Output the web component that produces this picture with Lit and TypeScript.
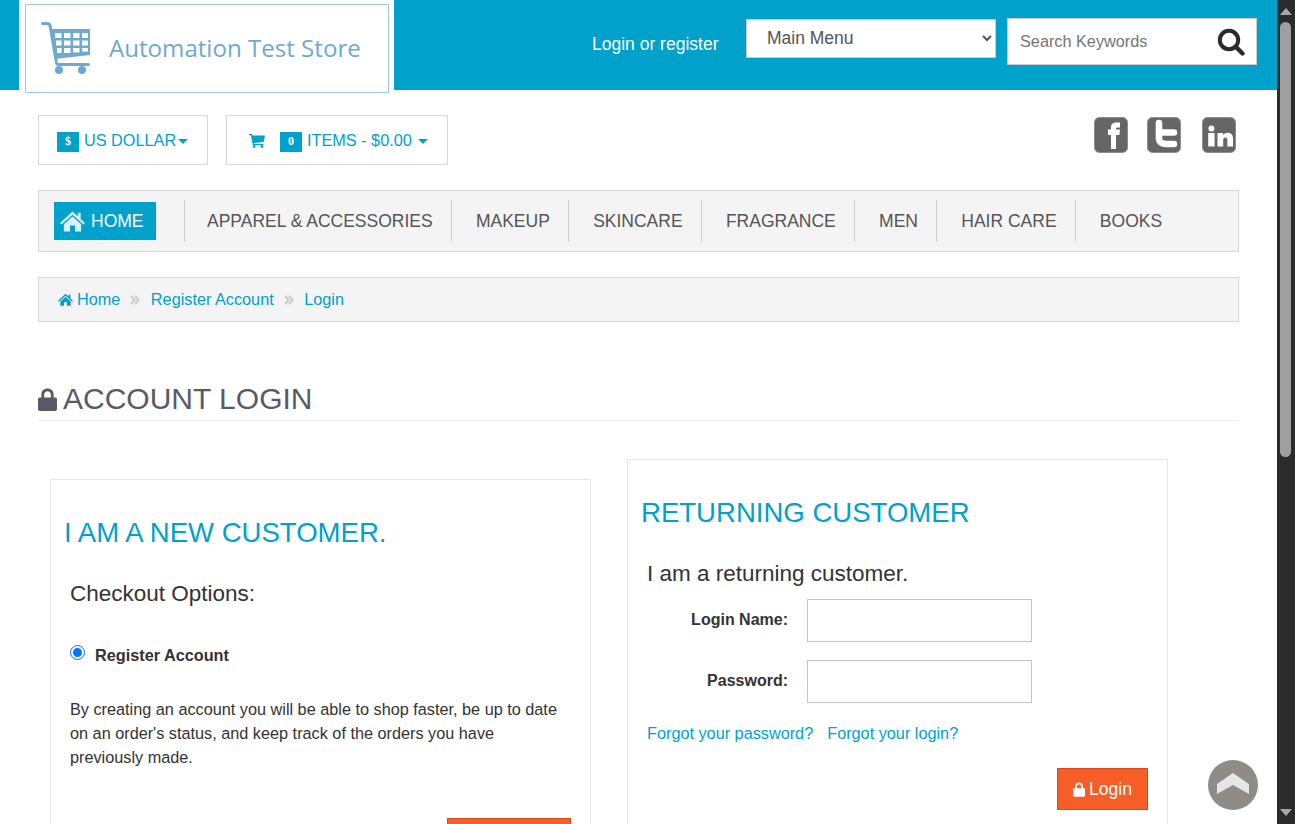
import { LitElement, css, html, svg } from 'lit'
import { customElement } from 'lit/decorators.js'

const homeIcon = (cls: string) => html`
  <svg class=${cls} viewBox="0 0 26 22">
    <path fill="currentColor" d="M13 1 L18.5 6 V2.5 H21.5 V8.8 L26 13 L24.4 14.7 L13 4.4 L1.6 14.7 L0 13 Z" />
    <path fill="currentColor" d="M13 6.4 L22 14.4 V22 H15.6 V15.6 H10.4 V22 H4 V14.4 Z" />
  </svg>
`

const lockIcon = (cls: string) => html`
  <svg class=${cls} viewBox="0 0 20 24">
    <path
      fill="currentColor"
      d="M2 10 H3.5 V7 C3.5 3 6.2 0.5 10 0.5 C13.8 0.5 16.5 3 16.5 7 V10 H18 C19.2 10 20 10.8 20 12 V22 C20 23.2 19.2 24 18 24 H2 C0.8 24 0 23.2 0 22 V12 C0 10.8 0.8 10 2 10 Z M6.5 10 H13.5 V7 C13.5 4.8 12 3.4 10 3.4 C8 3.4 6.5 4.8 6.5 7 Z"
      fill-rule="evenodd"
    />
  </svg>
`

const angleDouble = html`
  <svg class="sep-icon" viewBox="0 0 10 10">
    <path d="M1 1 L4.6 5 L1 9 M5 1 L8.6 5 L5 9" fill="none" stroke="currentColor" stroke-width="2" />
  </svg>
`

const cartBars = svg`
  <path d="M1.5 1.5 H6 C7.6 1.5 8.8 2.4 9.1 3.8 L15.5 41 C15.7 42 16.3 42.5 17.5 42.5 H47.5" fill="none" stroke="currentColor" stroke-width="3" stroke-linecap="round"/>
  <path fill="currentColor" d="M9.5 7 H49 V33 L13.5 37 Z"/>
  <g fill="#fff">
    <rect x="14" y="11" width="6.5" height="5"/><rect x="23" y="11" width="6.5" height="5"/><rect x="32" y="11" width="6.5" height="5"/><rect x="41" y="11" width="6" height="5"/>
    <rect x="15" y="18.5" width="5.5" height="5"/><rect x="23" y="18.5" width="6.5" height="5"/><rect x="32" y="18.5" width="6.5" height="5"/><rect x="41" y="18.5" width="6" height="5"/>
    <rect x="16" y="26" width="4.5" height="5"/><rect x="23" y="26" width="6.5" height="5"/><rect x="32" y="26" width="6.5" height="4.4"/><rect x="41" y="26" width="6" height="3.6"/>
  </g>
  <circle cx="18" cy="48" r="4" fill="currentColor"/>
  <circle cx="41" cy="48" r="4" fill="currentColor"/>
`

const socialBox = svg`<rect x="0.5" y="0.5" width="33" height="35" rx="5" fill="#666" stroke="#8e8e8e"/>`

const socialIcons = [
  svg`${socialBox}<path fill="#fff" d="M17 32 V18 H14 V12.5 H17 V10.5 C17 7 19 5.5 22.5 5.5 H26 V10.5 H24 C22.5 10.5 22 11 22 12 V12.5 H26 L25.4 18 H22 V32 Z"/>`,
  svg`${socialBox}<path d="M12 6 V21 C12 25 15 27 19 27 H27 M12 15.5 H27" fill="none" stroke="#fff" stroke-width="6.6" stroke-linejoin="round" stroke-linecap="round"/>`,
  svg`${socialBox}<g fill="#fff"><circle cx="9.4" cy="11.5" r="3"/><rect x="6.2" y="16" width="6.4" height="13.5"/><path d="M15.5 16 H21 V18 C22 16.6 24 15.8 26 15.8 C29 15.8 31 18 31 21.5 V29.5 H25.4 V23 C25.4 21.4 24.6 20.5 23.4 20.5 C22 20.5 21.2 21.5 21.2 23 V29.5 H15.5 Z"/></g>`,
]

const navItems = [
  'APPAREL & ACCESSORIES',
  'MAKEUP',
  'SKINCARE',
  'FRAGRANCE',
  'MEN',
  'HAIR CARE',
  'BOOKS',
]

@customElement('app-root')
export class AppRoot extends LitElement {
  render() {
    return html`
      <div class="window">
        <div class="page">
          <header class="topbar">
            <a class="logo">
              <div class="logo-frame">
                <svg class="logo-cart" viewBox="0 0 50 53">${cartBars}</svg>
                <span class="logo-text">Automation Test Store</span>
              </div>
            </a>
            <a class="login-link">Login or register</a>
            <select class="main-menu">
              <option>Main Menu</option>
            </select>
            <div class="search">
              <span class="placeholder">Search Keywords</span>
              <svg class="search-icon" viewBox="0 0 28 28">
                <circle cx="12" cy="12" r="9.2" fill="none" stroke="currentColor" stroke-width="4" />
                <path d="M18.8 18.8 L25.5 25.5" stroke="currentColor" stroke-width="4.4" stroke-linecap="round" />
              </svg>
            </div>
          </header>

          <div class="toolbar">
            <div class="drop currency">
              <span class="badge">$</span>
              <span>US DOLLAR</span><i class="caret"></i>
            </div>
            <div class="drop cart">
              <svg class="cart-icon" viewBox="0 0 16 14">
                <path
                  fill="currentColor"
                  d="M0 0 H3 L3.5 1.6 H16 L14.6 8 L4.8 8.9 L5.1 10 H14.4 V11.2 H3.9 L1.9 1.3 H0 Z"
                />
                <circle cx="5.2" cy="12.6" r="1.4" fill="currentColor" />
                <circle cx="13" cy="12.6" r="1.4" fill="currentColor" />
              </svg>
              <span class="badge">0</span>
              <span>ITEMS - $0.00</span><i class="caret"></i>
            </div>
            <div class="social">
              ${socialIcons.map((s) => html`<svg class="soc" viewBox="0 0 34 36">${s}</svg>`)}
            </div>
          </div>

          <nav class="nav">
            <a class="home-btn">${homeIcon('home-big')}HOME</a>
            <div class="nav-items">
              ${navItems.map((n) => html`<a class="nav-item">${n}</a>`)}
            </div>
          </nav>

          <div class="crumbs">
            <a class="crumb">${homeIcon('home-small')}Home</a>
            ${angleDouble}
            <a class="crumb">Register Account</a>
            ${angleDouble}
            <a class="crumb">Login</a>
          </div>

          <h1 class="title">${lockIcon('title-lock')}ACCOUNT LOGIN</h1>

          <div class="cards">
            <section class="card card-new">
              <h2>I AM A NEW CUSTOMER.</h2>
              <h4 class="checkout">Checkout Options:</h4>
              <label class="radio">
                <input type="radio" checked />
                <b>Register Account</b>
              </label>
              <p class="blurb">
                By creating an account you will be able to shop faster, be up to date on an order's
                status, and keep track of the orders you have previously made.
              </p>
              <div class="actions actions-new">
                <button class="btn btn-wide"></button>
              </div>
            </section>

            <section class="card card-return">
              <h2>RETURNING CUSTOMER</h2>
              <h4 class="returning">I am a returning customer.</h4>
              <div class="field">
                <label>Login Name:</label>
                <input type="text" />
              </div>
              <div class="field">
                <label>Password:</label>
                <input type="password" />
              </div>
              <div class="forgot">
                <a>Forgot your password?</a>
                <a>Forgot your login?</a>
              </div>
              <div class="actions">
                <button class="btn">${lockIcon('btn-lock')}Login</button>
              </div>
            </section>
          </div>

          <a class="to-top">
            <svg viewBox="0 0 50 50">
              <circle cx="25" cy="25" r="25" fill="#8f8b87" />
              <path d="M25 13 L41 24 V34 L25 25 L9 34 V24 Z" fill="#e6e6e6" />
            </svg>
          </a>
        </div>

        <div class="scrollbar">
          <i class="arrow up"></i>
          <div class="track"><div class="thumb"></div></div>
          <i class="arrow down"></i>
        </div>
      </div>
    `
  }

  static styles = css`
    :host {
      display: block;
      height: 824px;
      font-family: 'Liberation Sans', Arial, sans-serif;
      color: #333;
    }
    * {
      box-sizing: border-box;
    }
    .window {
      display: flex;
      height: 824px;
      overflow: hidden;
    }
    .page {
      position: relative;
      width: 1277px;
      flex: none;
      height: 824px;
      overflow: hidden;
      background: #fff;
    }

    /* top bar */
    .topbar {
      display: flex;
      align-items: flex-start;
      height: 90px;
      background: #00a1cb;
      padding-left: 19px;
    }
    .logo {
      width: 375px;
      height: 90px;
      flex: none;
      background: #fff;
      padding: 4px 5px 0 6px;
    }
    .logo-frame {
      display: flex;
      align-items: center;
      height: 89px;
      border: 1px solid #9fc5e8;
      background: #fff;
      padding: 0 0 0 15px;
      color: #6fa8d0;
    }
    .logo-cart {
      width: 50px;
      height: 53px;
      margin-top: -1px;
    }
    .logo-text {
      margin: -2px 0 0 18px;
      font-family: 'Open Sans', sans-serif;
      font-size: 24.1px;
      white-space: nowrap;
      color: #6fa8d0;
    }
    .login-link {
      margin: 34px 0 0 198px;
      width: 154px;
      color: #fff;
      font-size: 17.5px;
      line-height: 20px;
      white-space: nowrap;
    }
    .main-menu {
      width: 250px;
      height: 39px;
      margin-top: 19px;
      padding: 0 0 2px 16px;
      font: 17.5px 'Liberation Sans', Arial, sans-serif;
      color: #555;
      background: #fff;
      border: 1px solid #ccc;
      border-radius: 0;
    }
    .search {
      display: flex;
      align-items: center;
      justify-content: space-between;
      width: 250px;
      height: 47px;
      margin: 18px 0 0 11px;
      padding: 0 11px 0 12px;
      background: #fff;
      border: 1px solid #ccc;
    }
    .placeholder {
      font-size: 16.25px;
      color: #757575;
    }
    .search-icon {
      width: 28px;
      height: 28px;
      color: #2b2b2b;
    }

    /* currency, cart, social */
    .toolbar {
      display: flex;
      align-items: flex-start;
      height: 100px;
      padding: 25px 41px 0 38px;
    }
    .drop {
      display: flex;
      align-items: center;
      height: 50px;
      padding-top: 1px;
      border: 1px solid #d8d8d8;
      color: #00a1cb;
      font-size: 16.25px;
    }
    .currency {
      width: 170px;
      padding-left: 18px;
    }
    .cart {
      width: 222px;
      margin-left: 18px;
      padding-left: 22px;
    }
    .badge {
      display: flex;
      align-items: center;
      justify-content: center;
      width: 22px;
      height: 20px;
      margin: 2px 5px 0 0;
      background: #00a1cb;
      color: #fff;
      font-family: 'Liberation Serif', serif;
      font-size: 12px;
      font-weight: 700;
    }
    .caret {
      width: 0;
      height: 0;
      margin: 2px 0 0 2px;
      border-left: 5px solid transparent;
      border-right: 5px solid transparent;
      border-top: 5px solid currentColor;
    }
    .cart .caret {
      margin-left: 6px;
    }
    .cart-icon {
      width: 16px;
      height: 14px;
      margin-right: 15px;
    }
    .social {
      display: flex;
      gap: 19px;
      margin-left: auto;
      margin-top: 2px;
    }
    .soc {
      display: block;
      width: 34px;
      height: 36px;
    }
    .soc:last-child {
      margin-left: 2px;
    }

    /* main nav */
    .nav {
      display: flex;
      align-items: center;
      width: 1201px;
      height: 62px;
      margin-left: 38px;
      padding-left: 15px;
      background: #f4f4f4;
      border: 1px solid #d8d8d8;
    }
    .home-btn {
      display: flex;
      align-items: center;
      width: 102px;
      height: 38px;
      padding-left: 6px;
      background: #00a1cb;
      color: #fff;
      font-size: 17.5px;
    }
    .home-big {
      width: 25px;
      height: 22px;
      margin-right: 6px;
      color: #d9f3fa;
    }
    .nav-items {
      display: flex;
      align-items: stretch;
      height: 42px;
      margin-left: 28px;
      border-left: 1px solid #cfcfcf;
    }
    .nav-item {
      display: flex;
      align-items: center;
      padding: 0 18.3px 0 24px;
      border-right: 1px solid #cfcfcf;
      color: #555;
      font-size: 17.5px;
      white-space: nowrap;
    }
    .nav-item:first-child {
      padding-left: 22px;
    }
    .nav-item:last-child {
      border-right: 0;
    }

    /* breadcrumb */
    .crumbs {
      display: flex;
      align-items: center;
      width: 1201px;
      height: 45px;
      margin: 25px 0 0 38px;
      padding: 0 0 0 19px;
      background: #f4f4f4;
      border: 1px solid #d8d8d8;
      font-size: 16.25px;
      color: #00a1cb;
    }
    .crumb {
      display: flex;
      align-items: center;
    }
    .home-small {
      width: 15px;
      height: 13px;
      margin-right: 4px;
    }
    .sep-icon {
      width: 10px;
      height: 10px;
      margin: 1px 10.5px 0 10px;
      color: #ccc;
    }

    .title {
      display: flex;
      align-items: center;
      width: 1201px;
      height: 43px;
      margin: 56px 0 0 38px;
      border-bottom: 1px solid #eee;
      color: #5a5a66;
      font-size: 30px;
      font-weight: 400;
    }
    .title-lock {
      width: 19px;
      height: 23px;
      margin-right: 6px;
    }

    /* cards */
    .cards {
      display: flex;
      align-items: flex-start;
      gap: 36px;
      margin: 38px 0 0 50px;
    }
    .card {
      width: 541px;
      flex: none;
      height: 420px;
      border: 1px solid #e6e6e6;
      padding: 0 13px;
    }
    .card-new {
      margin-top: 20px;
    }
    h2 {
      margin: 37px 0 0;
      font-size: 27.55px;
      line-height: 32px;
      font-weight: 400;
      color: #00a1cb;
    }
    .checkout {
      margin: 31px 0 0 6px;
      font-size: 22.5px;
      line-height: 27px;
      font-weight: 400;
    }
    .radio {
      display: flex;
      align-items: center;
      margin: 36px 0 0 6px;
      font-size: 16.25px;
      line-height: 24px;
    }
    .radio input {
      width: 15px;
      height: 15px;
      margin: -5px 10px 0 0;
    }
    .blurb {
      width: 490px;
      margin: 30px 0 0 6px;
      font-size: 16.25px;
      line-height: 24px;
    }
    .actions {
      display: flex;
      justify-content: flex-end;
      margin: 25px 6px 0 0;
    }
    .actions-new {
      margin: 49px 6px 0 0;
    }
    .btn {
      display: flex;
      align-items: center;
      justify-content: center;
      width: 91px;
      height: 42px;
      background: #f65d27;
      border: 1px solid #d9491a;
      color: #fff;
      font: 17.5px 'Liberation Sans', Arial, sans-serif;
    }
    .btn-wide {
      width: 124px;
    }
    .btn-lock {
      width: 12px;
      height: 15px;
      margin-right: 4px;
    }
    .returning {
      margin: 31px 0 0 6px;
      font-size: 22.5px;
      line-height: 27px;
      font-weight: 400;
    }
    .field {
      display: flex;
      align-items: center;
      margin-bottom: 18px;
    }
    .field:first-of-type {
      margin-top: 12px;
    }
    .field label {
      width: 147px;
      margin-bottom: 2px;
      text-align: right;
      font-size: 16px;
      font-weight: 700;
    }
    .field input {
      width: 225px;
      height: 43px;
      margin-left: 19px;
      background: #fff;
      border: 1px solid #c4c4c4;
    }
    .forgot {
      display: flex;
      gap: 14px;
      margin: 20px 0 0 6px;
      font-size: 16.25px;
      line-height: 20px;
      color: #00a1cb;
    }

    .to-top {
      position: absolute;
      left: 1208px;
      top: 760px;
      width: 50px;
      height: 50px;
    }
    .to-top svg {
      display: block;
    }

    /* window scrollbar */
    .scrollbar {
      display: flex;
      flex: 1;
      flex-direction: column;
      align-items: center;
      background: #2b2b2b;
    }
    .track {
      flex: 1;
      width: 100%;
      padding: 7px 4px 0 3px;
    }
    .thumb {
      height: 435px;
      border-radius: 6px;
      background: #9f9f9f;
    }
    .arrow {
      width: 0;
      height: 0;
      border-left: 6px solid transparent;
      border-right: 6px solid transparent;
    }
    .arrow.up {
      margin-top: 8px;
      border-bottom: 7px solid #a8a8a8;
    }
    .arrow.down {
      margin-bottom: 8px;
      border-top: 7px solid #a8a8a8;
    }
  `
}

declare global {
  interface HTMLElementTagNameMap {
    'app-root': AppRoot
  }
}
